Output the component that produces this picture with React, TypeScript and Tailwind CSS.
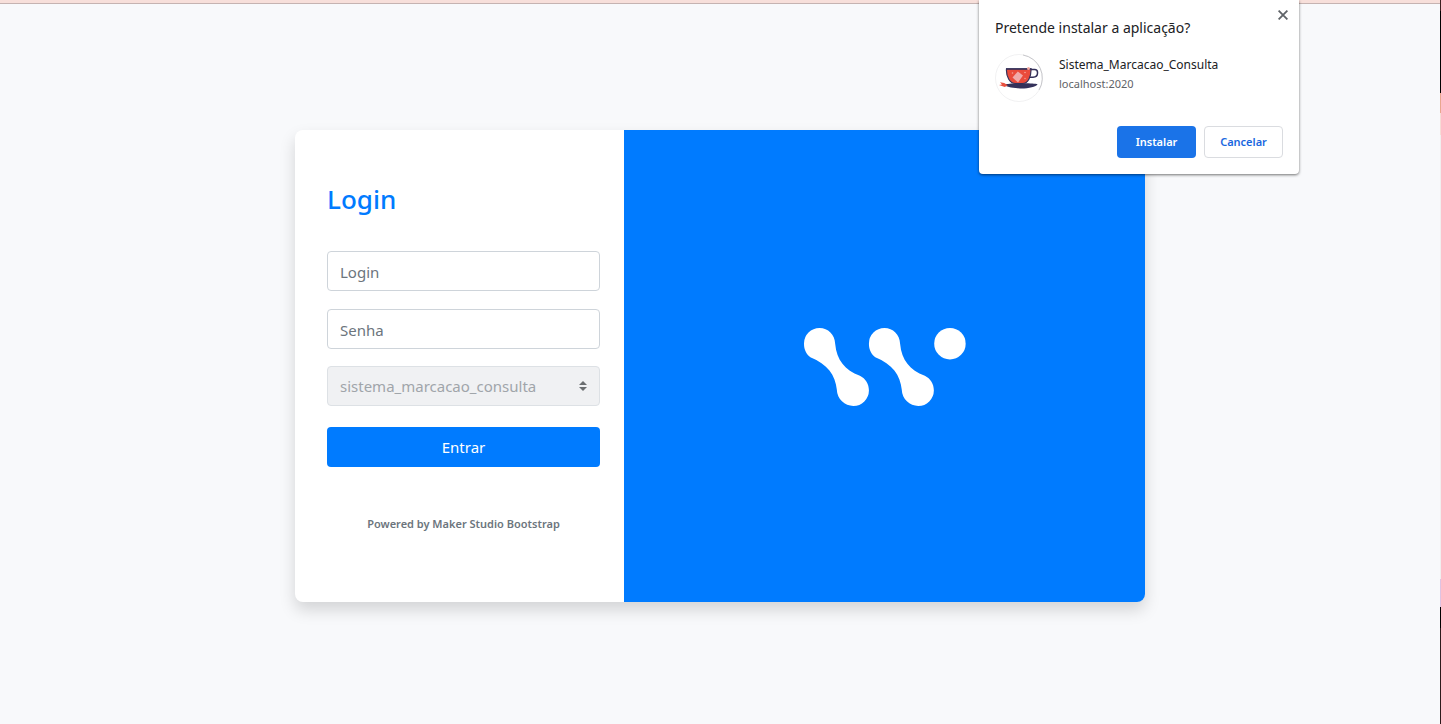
function BrandLogo() {
  const link =
    "M46.500 0C72 0 92 20 93 46C98 98 122 124 167 143C184 151 194 168 194 187A46.500 46.500 0 0 1 147.500 233C122 233 99 213 98 184C94 140 70 108 19 87C7 78 0 65 0 47A46.500 46.500 0 0 1 46.500 0Z";
  return (
    <svg viewBox="0 0 484 233" className="h-[78px] w-[162px]" fill="white" role="img" aria-label="Maker">
      <path d={link} />
      <path d={link} transform="translate(194 0)" />
      <circle cx="436" cy="47" r="47" />
    </svg>
  );
}

function CupIcon() {
  return (
    <svg viewBox="0 0 48 48" className="size-12 shrink-0" aria-hidden="true">
      <circle cx="24" cy="24" r="23.500" fill="#fff" stroke="#e8e8ea" strokeWidth="0.6" />
      <path d="M28 1A23.400 23.400 0 0 1 44 36" fill="none" stroke="#bdbdc2" strokeWidth="0.8" />
      <path d="M9 30.600C15 29 38 28.600 42.600 30.200C41 33 33 34.600 25 34.400C17 34.200 11 33 9 30.600z" fill="#34315a" />
      <path d="M4 31l3-.4-2-2.400 4.200.8 3.600 2.200-3 1.800z" fill="#e8503f" />
      <path d="M35.500 15.500h4.200q2.800 0 2.800 2.800v1q0 3.800-4.500 4h-4" fill="none" stroke="#34315a" strokeWidth="1.500" />
      <path d="M11.500 15H36c.3 8-3 14.500-8.500 14.500h-7C15 29.500 11 23 11.500 15z" fill="#ea4b3b" stroke="#34315a" strokeWidth="1.200" />
      <path d="M11 14.900H36.500" stroke="#34315a" strokeWidth="1.500" />
      <path d="M17.500 23.500l5.300-6 5.200 4-5 7z" fill="#f1aaa9" />
      <g fill="#f5a59c">
        <circle cx="17.500" cy="19" r=".8" />
        <circle cx="30" cy="18.500" r=".8" />
        <circle cx="30" cy="24.500" r=".7" />
        <circle cx="33.500" cy="14.500" r="1.500" />
      </g>
    </svg>
  );
}

const input =
  "block h-10 w-full rounded border border-[#ced4da] bg-white px-3 pt-[2px] text-[15px] text-gray-700 placeholder:text-[#6c757d] placeholder:opacity-100";

function InstallDialog() {
  return (
    <section
      role="dialog"
      aria-labelledby="install-title"
      className="absolute top-0 right-[142px] w-80 rounded-b bg-white px-4 pt-4 pb-4 shadow-[0_1px_3px_rgba(0,0,0,0.55)]"
    >
      <button type="button" aria-label="Fechar" className="absolute top-[7px] right-2 flex size-4 items-center justify-center">
        <svg viewBox="0 0 10 10" className="size-[10px]" fill="none" stroke="#5f6368" strokeWidth="1.800">
          <path d="M.6.6l8.800 8.800M9.400.6L.6 9.400" />
        </svg>
      </button>
      <h2 id="install-title" className="text-[14px] leading-6 text-[#202124]">
        Pretende instalar a aplicação?
      </h2>
      <div className="mt-[14px] flex gap-4">
        <CupIcon />
        <div className="leading-5">
          <p className="text-[12px] leading-[22px] text-[#202124]">Sistema_Marcacao_Consulta</p>
          <p className="text-[11px] leading-4 text-[#5f6368]">localhost:2020</p>
        </div>
      </div>
      <div className="mt-6 flex justify-end gap-2 text-[11px] font-semibold">
        <button type="button" className="h-8 w-[79px] rounded bg-[#1a73e8] text-white">
          Instalar
        </button>
        <button type="button" className="h-8 w-[79px] rounded border border-[#dadce0] text-[#1a67e0]">
          Cancelar
        </button>
      </div>
    </section>
  );
}

export default function App() {
  return (
    <div className="relative flex min-h-screen bg-[#f8f9fb] font-['Noto_Sans','Open_Sans',sans-serif]">
      <div className="flex flex-1 flex-col">
        <div className="h-1 border-b border-[#c5b3b1] bg-[#f7dfda]" />
        <main className="flex flex-1 items-center justify-center pt-1">
          <div className="flex w-[850px] overflow-hidden rounded-lg bg-white shadow-[0_8px_16px_rgba(0,0,0,0.15)]">
            <form className="w-[329px] pt-[51px] pr-6 pb-[68px] pl-8" onSubmit={(e) => e.preventDefault()}>
              <h1 className="text-[26px] leading-9 font-medium text-[#007bff]">Login</h1>
              <div className="mt-[34px] flex flex-col">
                <input type="text" aria-label="Login" placeholder="Login" className={input} />
                <input type="password" aria-label="Senha" placeholder="Senha" className={`mt-[18px] ${input}`} />
                <div className="relative mt-[17px]">
                  <select
                    aria-label="Sistema"
                    disabled
                    className="block h-10 w-full appearance-none rounded border border-[#dde1e5] bg-[#f0f1f3] pr-7 pl-3 text-[15px] text-[#a0a5aa] opacity-100"
                  >
                    <option>sistema_marcacao_consulta</option>
                  </select>
                  <svg
                    viewBox="0 0 8 10"
                    className="pointer-events-none absolute top-[15px] right-[13px] h-[10px] w-2"
                    fill="#6b6e71"
                    aria-hidden="true"
                  >
                    <path d="M4 0l4 4H0zM4 10l4-4H0z" />
                  </svg>
                </div>
                <button type="submit" className="mt-[21px] h-10 w-full rounded bg-[#007bff] text-[15px] text-white">
                  Entrar
                </button>
              </div>
              <p className="mt-[47px] text-center text-[11px] leading-5 font-semibold text-[#6c757d]">
                Powered by Maker Studio Bootstrap
              </p>
            </form>
            <div className="flex flex-1 items-center justify-center bg-[#007bff] pt-px">
              <BrandLogo />
            </div>
          </div>
        </main>
      </div>
      <div className="flex w-px flex-col" aria-hidden="true">
        <div className="h-[11px] bg-[#3b2020]" />
        <div className="h-[82px] bg-black" />
        <div className="h-5 bg-[#e9a68e]" />
        <div className="h-[22px] bg-[#f7dcd6]" />
        <div className="flex-1 bg-[#f1efef]" />
        <div className="h-[28px] bg-[#dfc3e2]" />
        <div className="h-[21px] bg-black" />
        <div className="h-24 bg-[#2c191b]" />
      </div>
      <InstallDialog />
    </div>
  );
}
